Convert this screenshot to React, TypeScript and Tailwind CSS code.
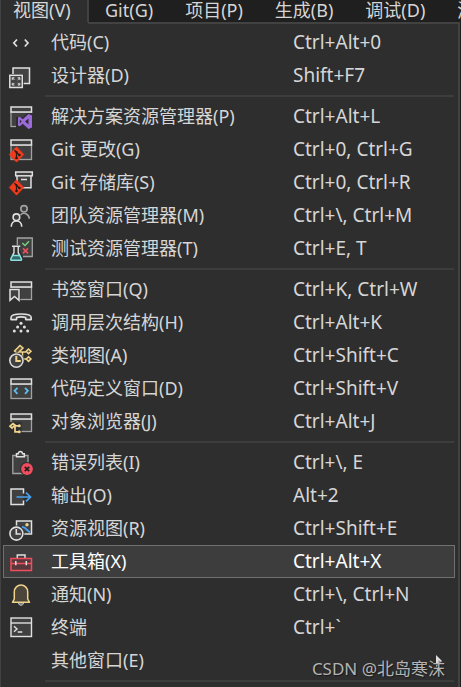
import React from 'react';
import { clsx } from 'clsx';

type IconName =
  | 'code' | 'designer' | 'solution' | 'gitChanges' | 'gitRepo' | 'team' | 'test'
  | 'bookmark' | 'callHierarchy' | 'classView' | 'codeDefinition' | 'objectBrowser'
  | 'errorList' | 'output' | 'resource' | 'toolbox' | 'bell' | 'terminal';

interface MenuEntry {
  label: string;
  shortcut?: string;
  icon?: IconName;
  active?: boolean;
  submenu?: boolean;
}

const menuBar = ['视图(V)', 'Git(G)', '项目(P)', '生成(B)', '调试(D)', '测试(S)'];

const groups: MenuEntry[][] = [
  [
    { label: '代码(C)', shortcut: 'Ctrl+Alt+0', icon: 'code' },
    { label: '设计器(D)', shortcut: 'Shift+F7', icon: 'designer' },
  ],
  [
    { label: '解决方案资源管理器(P)', shortcut: 'Ctrl+Alt+L', icon: 'solution' },
    { label: 'Git 更改(G)', shortcut: 'Ctrl+0, Ctrl+G', icon: 'gitChanges' },
    { label: 'Git 存储库(S)', shortcut: 'Ctrl+0, Ctrl+R', icon: 'gitRepo' },
    { label: '团队资源管理器(M)', shortcut: 'Ctrl+\\, Ctrl+M', icon: 'team' },
    { label: '测试资源管理器(T)', shortcut: 'Ctrl+E, T', icon: 'test' },
  ],
  [
    { label: '书签窗口(Q)', shortcut: 'Ctrl+K, Ctrl+W', icon: 'bookmark' },
    { label: '调用层次结构(H)', shortcut: 'Ctrl+Alt+K', icon: 'callHierarchy' },
    { label: '类视图(A)', shortcut: 'Ctrl+Shift+C', icon: 'classView' },
    { label: '代码定义窗口(D)', shortcut: 'Ctrl+Shift+V', icon: 'codeDefinition' },
    { label: '对象浏览器(J)', shortcut: 'Ctrl+Alt+J', icon: 'objectBrowser' },
  ],
  [
    { label: '错误列表(I)', shortcut: 'Ctrl+\\, E', icon: 'errorList' },
    { label: '输出(O)', shortcut: 'Alt+2', icon: 'output' },
    { label: '资源视图(R)', shortcut: 'Ctrl+Shift+E', icon: 'resource' },
    { label: '工具箱(X)', shortcut: 'Ctrl+Alt+X', icon: 'toolbox', active: true },
    { label: '通知(N)', shortcut: 'Ctrl+\\, Ctrl+N', icon: 'bell' },
    { label: '终端', shortcut: 'Ctrl+`', icon: 'terminal' },
    { label: '其他窗口(E)', submenu: true },
  ],
];

// Tool window frame shared by several icons
const Frame = ({ top = 4 }: { top?: number }) => (
  <>
    <rect x="3" y={top + 5} width="20.5" height={18 - top + 0.5} fill="#404040" stroke="#a2a2a2" strokeWidth="1.3" />
    <rect x="3" y={top} width="20.5" height="5" fill="#404040" stroke="#e0e0e0" strokeWidth="1.5" />
  </>
);

const GitBadge = () => (
  <>
    <path d="M8.5 10.8 L15.8 18.5 L8.5 26.2 L1.2 18.5 Z" fill="#f03c1c" stroke="#f03c1c" strokeWidth="0.6" strokeLinejoin="round" />
    <path d="M6.4 14.2 L8.5 16.2 V22 M8.7 16.4 L11.2 19" fill="none" stroke="#2a1a18" strokeWidth="1.2" />
    <circle cx="8.5" cy="16.2" r="1.1" fill="#2a1a18" />
    <circle cx="8.5" cy="22" r="1.3" fill="#2a1a18" />
    <circle cx="11.4" cy="19" r="1.3" fill="#2a1a18" />
  </>
);

const icons: Record<IconName, React.ReactNode> = {
  code: (
    <path d="M9 10.5 L5.8 14 L9 17.5 M16.8 10.5 L20 14 L16.8 17.5" fill="none" stroke="#e0e0e0" strokeWidth="1.7" />
  ),
  designer: (
    <>
      <rect x="5" y="6" width="16.5" height="15.5" fill="#444444" stroke="#e0e0e0" strokeWidth="1.5" />
      <rect x="0.5" y="12" width="15.2" height="15" fill="#2e2e2e" />
      <rect x="1.8" y="13.3" width="12.5" height="12.2" fill="#444444" stroke="#e0e0e0" strokeWidth="1.5" />
      <path d="M4.3 17.9 V15.8 H6.4 M4.3 15.8 L6.4 17.9 M9.7 15.8 H11.8 V17.9 M11.8 15.8 L9.7 17.9 M4.3 20.9 V23 H6.4 M4.3 23 L6.4 20.9 M9.7 23 H11.8 V20.9 M11.8 23 L9.7 20.9" fill="none" stroke="#e0e0e0" />
    </>
  ),
  solution: (
    <>
      <Frame />
      <path d="M8 14 H15 L19 10 H26 V27 H8 Z" fill="#2e2e2e" />
      <path d="M20.5 11 L24 12.5 V24.5 L20.5 26 L14.8 20.8 L11.8 23.3 L10 22.4 V14.6 L11.8 13.7 L14.8 16.2 Z M20.5 15.6 L17 18.5 L20.5 21.4 Z M11.8 16.6 V20.4 L13.6 18.5 Z" fill="#9b6bdc" fillRule="evenodd" />
    </>
  ),
  gitChanges: (
    <>
      <Frame />
      <GitBadge />
    </>
  ),
  gitRepo: (
    <>
      <path d="M9 7 V18.8 H23 V7" fill="#404040" stroke="#e0e0e0" strokeWidth="1.5" />
      <rect x="7.7" y="3" width="16.6" height="3.8" fill="#404040" stroke="#e0e0e0" strokeWidth="1.5" />
      <path d="M13 10.5 H19" stroke="#e0e0e0" strokeWidth="1.5" />
      <GitBadge />
    </>
  ),
  team: (
    <g fill="#3d3d3d" strokeWidth="1.6">
      <g stroke="#a2a2a2">
        <circle cx="16" cy="6.8" r="3.2" />
        <path d="M12.5 13 C15.5 9.7 21 11.5 21.3 16.8" fill="none" />
      </g>
      <g stroke="#e0e0e0">
        <circle cx="8.4" cy="15.2" r="3.3" />
        <path d="M3.3 24.8 C3.3 17 13.7 17 13.7 24.8" fill="none" />
      </g>
    </g>
  ),
  test: (
    <>
      <path d="M9.3 10 V3 H24.3 V21.5 H15" fill="#404040" stroke="#a2a2a2" strokeWidth="1.3" />
      <path d="M14.3 8 L17 10.5 L21 6.3" fill="none" stroke="#75d27f" strokeWidth="1.5" />
      <path d="M15 13.3 L20 18.3 M20 13.3 L15 18.3" stroke="#e4525e" strokeWidth="1.7" />
      <path d="M5.7 11 H10.5 V17.5 L15 26 H1.5 L5.7 17.5 Z" fill="#2e2e2e" />
      <path d="M4.5 20.5 H11.8 L14 25.2 H2.5 Z" fill="#306a68" />
      <path d="M4 11.3 H12.2 M6 11.5 V17.7 L4.5 20.3 M10.2 11.5 V17.7 L11.7 20.3" fill="none" stroke="#e0e0e0" strokeWidth="1.4" />
      <path d="M4.4 20.6 L2.8 24 Q2.4 25.3 4 25.3 H12.3 Q13.9 25.3 13.5 24 L11.8 20.6 Z" fill="none" stroke="#8ae0e0" strokeWidth="1.5" />
    </>
  ),
  bookmark: (
    <>
      <Frame top={6} />
      <rect x="0" y="12" width="12.3" height="14" fill="#2e2e2e" />
      <path d="M2 13.5 H11 V24.3 L6.5 20.5 L2 24.3 Z" fill="#404040" stroke="#e0e0e0" strokeWidth="1.5" />
    </>
  ),
  callHierarchy: (
    <g fill="#e0e0e0">
      <path d="M3 8.5 C3 3.8 23.2 3.8 23.2 8.5 V10.6 H17.7 V8.5 C15 7.7 11.3 7.7 8.6 8.5 V10.6 H3 Z" fill="#404040" stroke="#e0e0e0" strokeWidth="1.6" strokeLinejoin="round" />
      <circle cx="13" cy="14.2" r="1.5" />
      <circle cx="9.6" cy="18" r="1.5" />
      <circle cx="16.4" cy="18" r="1.5" />
      <circle cx="6.3" cy="22" r="1.5" />
      <circle cx="13" cy="22" r="1.5" />
      <circle cx="19.7" cy="22" r="1.5" />
    </g>
  ),
  classView: (
    <>
      <g fill="#5b5036" stroke="#f1d48c" strokeWidth="1.5">
        <path d="M6.5 9 L12 3.5 L15 6 L9.5 11.5 Z" />
        <path d="M11.5 10 H18 M14.5 10 V17 H18" fill="none" />
        <path d="M20.5 7 L23 9.3 L20.5 11.7 L18.2 9.3 Z" />
        <path d="M20.5 14.7 L23 17 L20.5 19.4 L18.2 17 Z" />
      </g>
      <circle cx="8.4" cy="18.6" r="8" fill="#2e2e2e" />
      <circle cx="8.4" cy="18.6" r="6.6" fill="#404040" stroke="#d8d8d8" strokeWidth="1.6" />
      <path d="M8.3 13.8 V19 H12.8" fill="none" stroke="#f1d48c" strokeWidth="2" />
    </>
  ),
  codeDefinition: (
    <>
      <Frame />
      <path d="M9.5 12.8 L6.6 15.8 L9.5 18.8 M17 12.8 L19.9 15.8 L17 18.8" fill="none" stroke="#5cc0ee" strokeWidth="1.8" />
    </>
  ),
  objectBrowser: (
    <>
      <Frame top={6} />
      <rect x="0" y="14" width="13.5" height="12" fill="#2e2e2e" />
      <path d="M2 18.2 L5 15.5 L7 17 L4 20 Z M6.5 17.8 H11.5 M7 18 V23.8 H11.5" fill="none" stroke="#f1d48c" strokeWidth="1.7" />
      <circle cx="11.3" cy="17.8" r="1.5" fill="#f1d48c" />
      <circle cx="11.3" cy="23.8" r="1.5" fill="#f1d48c" />
    </>
  ),
  errorList: (
    <>
      <path d="M4.8 6.5 H20 V24.5 H4.8 Z" fill="#404040" stroke="#a2a2a2" strokeWidth="1.3" />
      <path d="M8.5 7.7 V4.8 H10.2 C10.5 1.7 14.3 1.7 14.6 4.8 H16.3 V7.7 Z" fill="#404040" stroke="#e0e0e0" strokeWidth="1.5" />
      <circle cx="19" cy="20" r="7" fill="#2e2e2e" />
      <circle cx="19" cy="20" r="5.9" fill="#f04e5e" />
      <path d="M16.8 17.8 L21.2 22.2 M21.2 17.8 L16.8 22.2" stroke="#1f1f1f" strokeWidth="1.7" />
    </>
  ),
  output: (
    <>
      <path d="M15.5 11.5 V7 H3 V22.5 H15.5 V18.5" fill="#404040" stroke="#e0e0e0" strokeWidth="1.5" />
      <path d="M8.5 15 H22.5 M18 10.7 L22.5 15 L18 19.3" fill="none" stroke="#4da0ea" strokeWidth="1.7" />
    </>
  ),
  resource: (
    <>
      <rect x="8.5" y="6" width="15" height="13" fill="#404040" stroke="#e0e0e0" strokeWidth="1.5" />
      <circle cx="19" cy="9.8" r="1.7" fill="#f1d48c" />
      <path d="M14 12 L16.5 12.5 L22 17.5" fill="none" stroke="#4da0ea" strokeWidth="1.8" />
      <circle cx="8.4" cy="18.6" r="8" fill="#2e2e2e" />
      <circle cx="8.4" cy="18.6" r="6.5" fill="#404040" stroke="#e0e0e0" strokeWidth="1.6" />
      <path d="M8.3 14 V19 H12.8" fill="none" stroke="#e0e0e0" strokeWidth="1.6" />
    </>
  ),
  toolbox: (
    <>
      <path d="M9.3 10.5 V7 H17 V10.5" fill="none" stroke="#e0e0e0" strokeWidth="1.5" />
      <path d="M3 10.5 H23.5 V22.5 H3 Z M3 15.5 H23.5" fill="#5a373b" stroke="#f04e5e" strokeWidth="1.5" />
      <path d="M7.8 13 V17.3 M18.3 13 V17.3" stroke="#e0e0e0" strokeWidth="1.5" />
    </>
  ),
  bell: (
    <>
      <path d="M10.5 22 C10.5 25 15.5 25 15.5 22" fill="#808080" stroke="#c0c0c0" />
      <path d="M4.5 21.3 L6.3 18 V11 C6.3 1.8 19.7 1.8 19.7 11 V18 L21.5 21.3 Z" fill="#4b4639" stroke="#f1d48c" strokeWidth="1.5" strokeLinejoin="round" />
    </>
  ),
  terminal: (
    <>
      <rect x="3" y="4" width="20.5" height="18.5" fill="#404040" stroke="#e0e0e0" strokeWidth="1.4" />
      <path d="M3 9 H23.5" stroke="#e0e0e0" strokeWidth="1.4" />
      <path d="M6 12.3 L9 15 L6 17.7 M9.7 18 H14.3" fill="none" stroke="#e0e0e0" strokeWidth="1.4" />
    </>
  ),
};

const Separator = () => <li role="separator" className="ml-[42px] mr-px my-[3px] h-[2px] bg-[#3d3d3d]" />;

function MenuRow({ item }: { item: MenuEntry }) {
  return (
    <li role="none">
      <button
        role="menuitem"
        className={clsx(
          'flex w-full h-[33px] items-center border pl-1 pr-3 text-left whitespace-nowrap',
          item.active ? 'border-[#707070] bg-[#3d3d3d] text-white' : 'border-transparent'
        )}
      >
        <svg viewBox="0 0 27 27" className="w-[27px] h-[27px] shrink-0" aria-hidden="true">
          {item.icon && icons[item.icon]}
        </svg>
        <span className="ml-4 w-[242px] shrink-0 pb-[2px]">{item.label}</span>
        <span className="flex-1 pb-[2px] text-[19px]">{item.shortcut}</span>
        {item.submenu && (
          <svg viewBox="0 0 6 12" className="w-[6px] h-[12px]" aria-hidden="true">
            <path d="M0 0 L6 6 L0 12 Z" fill="#e0e0e0" />
          </svg>
        )}
      </button>
    </li>
  );
}

export default function App() {
  return (
    <div className="relative min-h-screen overflow-hidden bg-[#1f1f1f] text-lg leading-6 text-[#d6d6d6] font-['Noto_Sans','Noto_Sans_CJK_SC',sans-serif]">
      {/* Menu bar */}
      <nav className="flex h-[22px] leading-5">
        {menuBar.map((name, i) => (
          <button
            key={name}
            className={clsx(
              'flex shrink-0 items-start whitespace-nowrap',
              i === 0 ? 'w-[89px] pl-3 bg-[#2e2e2e] border-l border-r-2 border-[#424242]' : 'px-4'
            )}
          >
            {name}
          </button>
        ))}
      </nav>

      {/* Dropdown */}
      <div className="mr-px bg-[#2e2e2e] border-l border-r-2 border-[#424242]">
        <div className="ml-[87px] h-[2px] bg-[#424242]" />
        <ul role="menu" className="pl-[2px] pr-[3px] pt-[2px] pb-1">
          {groups.map((group, i) => (
            <React.Fragment key={i}>
              {group.map(item => (
                <MenuRow key={item.label} item={item} />
              ))}
              <Separator />
            </React.Fragment>
          ))}
        </ul>
      </div>

      {/* Watermark */}
      <div className="absolute right-4 bottom-2 text-[17px] leading-6 text-[#b4b4b4] [text-shadow:1px_1px_1px_#1a1a1a] pointer-events-none">
        CSDN @北岛寒沫
      </div>
    </div>
  );
}
